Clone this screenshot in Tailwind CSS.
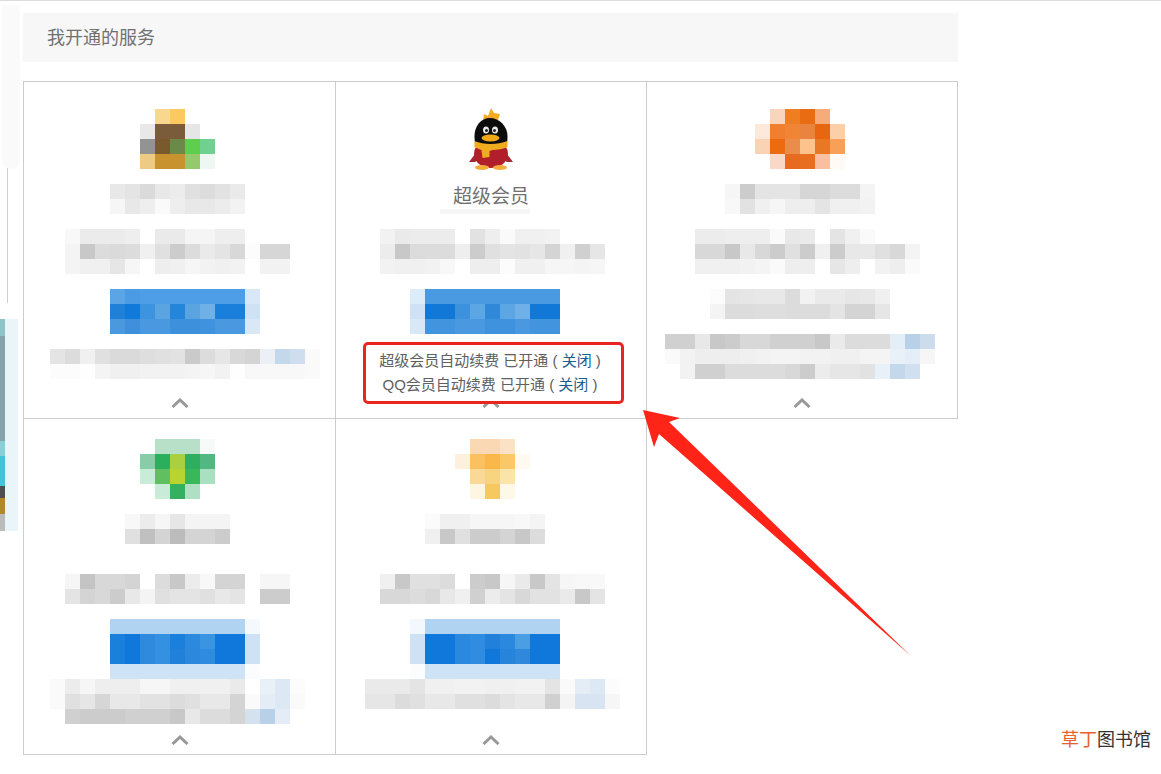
<!DOCTYPE html>
<html lang="zh">
<head>
  <meta charset="utf-8" />
  <title>我开通的服务</title>
  <script src="https://cdn.jsdelivr.net/npm/@tailwindcss/browser@4"></script>
</head>
<body class="bg-white h-[774px] overflow-hidden relative border-t border-[#dcdcdc] [font-family:'Liberation_Sans','Noto_Sans_CJK_SC',sans-serif]">
  <!-- cut-off neighbour on the left edge -->
  <div class="absolute left-[2px] top-[4px] w-[18px] h-[164px] bg-[#fafafa] rounded-b-full"></div>
  <div class="absolute left-[7px] top-[167px] w-px h-[135px] bg-[#cfcfcf]"></div>
  <div class="absolute left-0 top-[318px] w-[18px] h-[212px] bg-[#e9f5f9]">
    <div class="w-[5px] flex flex-col h-full">
      <div class="h-[17px] bg-[#8fc4c8]"></div>
      <div class="h-[105px] bg-[#86a4aa]"></div>
      <div class="h-[15px] bg-[#8ccdd8]"></div>
      <div class="h-[30px] bg-[#43c4d8]"></div>
      <div class="h-[12px] bg-[#4b4f50]"></div>
      <div class="h-[16px] bg-[#b08a2a]"></div>
      <div class="h-[17px] bg-[#bbbbbb]"></div>
    </div>
  </div>

  <div class="relative ml-[23px] w-[935px] pt-[12px]">
    <div class="h-[49px] bg-[#f7f7f7] pl-[24px] pt-[2px] flex items-center text-[18px] text-[#707070]">我开通的服务</div>

    <div class="mt-[19px] grid grid-cols-[313px_311px_311px] grid-rows-[338px_336px]">
      <!-- row 1 -->
      <div class="flex flex-col border-t border-l border-r border-b border-[#cccccc] pt-[27px]">
        <div data-px=". f9d78f fcc95f . .|e8 7a5c3a 7a5c3a e6 .|93 7a5a2c 6b8a4a 5fce4f 6fd08f|eecb85 c8922f c8922f 95c96c eef7f2" class="ml-[116px]"></div>
        <div data-px="e8 e4 da e8 ec e0 dc e2 ea|f6 e8 ee fa ee e8 e8 ec f2" class="ml-[86px] mt-[15px]"></div>
        <div data-px="f8 eb eb eb ee . ea ea f5 f5 ee ee . . .|f4 c8 dc da dc f0 e0 cc dc ea e4 d8 fc d6 d6|f4 f0 f0 e6 f6 . ee f0 f6 f2 f0 f2 . f2 f2" class="ml-[41px] mt-[15px]"></div>
        <div data-px="5ba4e6 4a9be4 4d9ee6 4d9ee6 4d9ee6 4d9ee6 4d9ee6 4d9ee6 4d9ee6 d8e8f8|1f80d8 0f7ad9 3d94de 5aa4e2 2486da 5ba4e2 6fb0e6 1a7fdb 1a7fdb cfe2f5|4a98de 3e90dc 4a98e0 4a98e0 3c90dc 3c90dc 3f92dd 4a98e0 4a98e0 d9e7f6" class="ml-[86px] mt-[15px]"></div>
        <div data-px="e4 dc f0 e0 da da de e0 e2 ca dc e6 d8 d4 eaf0f6 c4d8ec cfdeef fa|fc fc fe f4 f0 f0 f2 f2 f2 f4 f6 f2 fe f8 f8 f8 f8 fa" class="ml-[26px] mt-[15px]"></div>
        <svg class="mt-auto mb-[10px] mx-auto w-[18px] h-[10px]" viewBox="0 0 18 10"><path d="M1.5 9 9 2l7.500 7" fill="none" stroke="#999" stroke-width="3"/></svg>
      </div>

      <div class="flex flex-col border-t border-r border-b border-[#cccccc] pt-[26px]">
        <svg class="ml-[133px] w-[44px] h-[62px]" viewBox="0 0 44 62">
          <path d="M14 13 15 6l4 2 3-8 3 5 6 1-2 6-5 4-9 0z" fill="#f2ab22"/>
          <path d="M9 42 0 54l6 0 7-5zM35 42l9 12-6 0-7-5z" fill="#a32a32"/>
          <ellipse cx="22" cy="46" rx="17" ry="14" fill="#b01f2a"/>
          <ellipse cx="13" cy="59.500" rx="7" ry="2.500" fill="#f4ad3a"/>
          <ellipse cx="31" cy="59.500" rx="7" ry="2.500" fill="#f4ad3a"/>
          <path d="M21 10C12 10 5.500 18 5.500 28c0 5 .5 7 1.500 9h30c1-2 1.500-4 1.500-9C38.500 18 30 10 21 10z" fill="#0c0c0c"/>
          <path d="M5.500 33c9 4 23 4 33 0v6c-4 2-10 3-15 3l-3 1v6l-7 1-1-8c-3-1-5-2-7-3z" fill="#eeac1e"/>
          <ellipse cx="17" cy="22" rx="3" ry="3.500" fill="#e8e8e8"/>
          <ellipse cx="26" cy="22" rx="3" ry="3.500" fill="#e8e8e8"/>
          <circle cx="17.500" cy="22.500" r="1.500" fill="#222"/>
          <circle cx="25.500" cy="22.500" r="1.500" fill="#222"/>
          <ellipse cx="21.500" cy="30" rx="9" ry="3.500" fill="#f0a818"/>
        </svg>
        <div class="h-[30px] mt-[14px] pt-[1px]">
          <div class="text-center text-[19px] leading-[24px] text-[#707070]">超级会员</div>
          <div class="ml-[104px] w-[90px] h-[5px] bg-[#f6f6f6]"></div>
        </div>
        <div data-px="f2 ea ec ec ec . e2 ee fa f0 f0 f2 . . .|ec c8 dc dc dc ee cc e0 e4 e2 e6 d4 f0 d0 e6|f2 f0 f0 f2 f8 . ee ee fc f0 f0 f6 f6 f4 f6" class="ml-[44px] mt-[15px]"></div>
        <div data-px="dcecf9 4a9ae2 4a9ae2 4a9ae2 4a9ae2 4a9ae2 4a9ae2 4a9ae2 4a9ae2 4a9ae2|cfe2f5 1278d8 1278d8 3c92dc 5ca6e4 3088d8 5ca6e4 70b0e8 1278d8 1278d8|d8e8f6 4394de 4394de 4a98e0 4a98e0 3f92dd 3f92dd 4a98e0 4394de 4394de" class="ml-[74px] mt-[15px]"></div>
        <div class="relative z-10 ml-[27px] mt-[8px] mb-[-6px] w-[261px] h-[62px] border-[3px] border-[#e8261f] rounded-[5px] bg-white pr-[7px] flex flex-col justify-center text-center text-[15px] leading-[24px] text-[#606060]">
          <p>超级会员自动续费 已开通 ( <span class="text-[#1c5c8c]">关闭</span> )</p>
          <p>QQ会员自动续费 已开通 ( <span class="text-[#1c5c8c]">关闭</span> )</p>
        </div>
        <svg class="mt-auto mb-[10px] mx-auto w-[18px] h-[10px]" viewBox="0 0 18 10"><path d="M1.5 9 9 2l7.500 7" fill="none" stroke="#999" stroke-width="3"/></svg>
      </div>

      <div class="flex flex-col border-t border-r border-b border-[#cccccc] pt-[27px]">
        <div data-px=". f9d5bd ef7d22 ea6c12 f6ab78 .|fde9dc f08030 ef8535 e9843f e8660f fbd0a8|fbd3b4 ec6a10 ea8c4a fcc48c e87826 f8a058|. fad8c8 e66a20 e96f20 f8c0a0 fffaf6" class="ml-[108px]"></div>
        <div data-px="f6 cc e4 e4 e4 d6 d6 dc dc f4|f8 e2 f0 f6 ee ee e4 f0 f0 f2" class="ml-[78px] mt-[15px]"></div>
        <div data-px="ec ec ee ee ee fa e8 ea . e4 f0 fa . . .|d8 d8 c8 e8 d8 cc e0 cc f0 cc e8 e8 e0 d8 f4|f0 f0 f0 f2 f4 fa ee ee . e6 ee . f2 ee fa" class="ml-[48px] mt-[15px]"></div>
        <div data-px="fc e4 e6 e8 e8 dc f2 ea ea e6 e8 f0|f4 dc dc de de dc dc dc e4 d4 d4 e6" class="ml-[63px] mt-[15px]"></div>
        <div data-px="d0 d0 e8 c8 cc d8 d8 d0 d0 d0 c8 ea dc dc dc e4eef6 b8d0e8 ccdcec|fa f2 ee ee ee f0 f2 f4 f4 f2 f2 f0 f0 f4 f4 e8f0f8 e4eef8 f6|. f2 d0 d0 dc dc dc dc d8 cc ec e6 e6 e2 e8f0f8 c4d8ec d0e0f0 ." class="ml-[18px] mt-[15px]"></div>
        <svg class="mt-auto mb-[10px] mx-auto w-[18px] h-[10px]" viewBox="0 0 18 10"><path d="M1.5 9 9 2l7.500 7" fill="none" stroke="#999" stroke-width="3"/></svg>
      </div>

      <!-- row 2 -->
      <div class="flex flex-col border-l border-r border-b border-[#cccccc] pt-[20px]">
        <div data-px=". b8e0c8 b8e0c8 b8e0c8 f6faf8|88cca8 2ab05c a8d040 30ae60 50b880|c8ecd8 60c060 b8d430 38b858 a8e0c0|. c8ecd8 34b060 b0e0c4 ." class="ml-[116px]"></div>
        <div data-px="f8 ec f6 e6 f4 f4 f4|e0 c0 d4 bc d4 d4 cc" class="ml-[101px] mt-[15px]"></div>
        <div data-px="f6 c4 d8 d8 d4 . dc c8 ec f8 d4 d4 . f6 f6|e4 d4 d8 cc e8 f4 e0 e4 e4 e0 e8 e4 . cc cc" class="ml-[41px] mt-[30px]"></div>
        <div data-px="b0d3f2 b0d3f2 b0d3f2 b0d3f2 b0d3f2 b0d3f2 b0d3f2 b0d3f2 b0d3f2 f4f9fd|1a80dc 1078da 2f8ade 3490e0 1a80dc 2c8ade 3a94e2 1078da 1078da cfe2f5|1a80dc 1078da 2f8ade 3490e0 2080da 2c88dc 2e8cde 1078da 1078da cfe2f5|cfe3f6 cfe3f6 cfe3f6 cfe3f6 cfe3f6 cfe3f6 cfe3f6 cfe3f6 cfe3f6 fafcfe" class="ml-[86px] mt-[15px]"></div>
        <div data-px="fa ec f6 ee ee ee f6 f6 f0 f0 f0 f0 ea . e8f0f8 dce8f4 fc|fa e0 e6 d6 e8 e8 e2 e2 dc e0 e8 e8 d4 fa e4ecf6 dce8f4 fa|. d0 cc cc cc d0 d0 d0 c8 e8 dc dc d4 d4e2f0 b8d0e8 e4ecf6 ." class="ml-[26px]"></div>
        <svg class="mt-auto mb-[9px] mx-auto w-[18px] h-[10px]" viewBox="0 0 18 10"><path d="M1.5 9 9 2l7.500 7" fill="none" stroke="#999" stroke-width="3"/></svg>
      </div>

      <div class="flex flex-col border-r border-b border-[#cccccc] pt-[20px]">
        <div data-px=". fbd8b4 fbd8b4 fbe2c4 .|fdf0dc fbc060 fab84a fbc868 fffaf0|. f9d898 f8d480 fbe4a8 .|. fef6e0 f6c860 fef8e8 ." class="ml-[119px]"></div>
        <div data-px="fb f0 f0 f6 f6 f6 f8 f4|f0 c8 e0 cc cc d4 c8 dc" class="ml-[89px] mt-[15px]"></div>
        <div data-px="f0 c8 e0 e0 dc . cc c8 f6 ea c8 e4 f6 f8 f8|d8 d8 dc d8 e8 f0 d0 ec e4 d8 e2 e2 ea c8 e4" class="ml-[44px] mt-[30px]"></div>
        <div data-px="f2f8fd b0d3f2 b0d3f2 b0d3f2 b0d3f2 b0d3f2 b0d3f2 b0d3f2 b0d3f2 b0d3f2|cfe2f5 1078da 1078da 2a88de 2f8ce0 2080da 2a88de 4a9ee4 1078da 1078da|cfe2f5 1078da 1078da 2a88de 2f8ce0 1078da 2884da 3088dc 1078da 1078da|fafcfe cfe3f6 cfe3f6 cfe3f6 cfe3f6 cfe3f6 cfe3f6 cfe3f6 cfe3f6 cfe3f6" class="ml-[74px] mt-[15px]"></div>
        <div data-px="ea ea ea e4 f0 f0 f2 f2 f0 f0 f2 f2 e4 fa e4ecf6 dce8f4 fc|e6 e6 dc e0 e8 e8 e0 e0 dc e4 e8 e8 d0 f4 d8e4f2 d8e4f2 f6" class="ml-[29px]"></div>
        <svg class="mt-auto mb-[9px] mx-auto w-[18px] h-[10px]" viewBox="0 0 18 10"><path d="M1.5 9 9 2l7.500 7" fill="none" stroke="#999" stroke-width="3"/></svg>
      </div>
    </div>
  </div>

  <!-- annotation arrow -->
  <svg class="absolute left-0 top-[-1px] w-[1161px] h-[774px] z-20 pointer-events-none" viewBox="0 0 1161 774">
    <path d="M643 410 680 418 669 422 911 656 659 434 654 447z" fill="#ff2318"/>
  </svg>

  <div class="absolute left-[1061px] top-[727px] text-[18px] leading-[24px] text-[#333] whitespace-nowrap"><span class="text-[#e8622c]">草丁</span>图书馆</div>

  <script>
    // blurred blocks: 15px mosaic, "|" splits rows, 2 hex digits = grey, "." = empty
    document.querySelectorAll("[data-px]").forEach((el) => {
      el.dataset.px.split("|").forEach((row) => {
        const line = document.createElement("div");
        line.className = "flex";
        row.trim().split(/\s+/).forEach((c) => {
          const px = document.createElement("div");
          px.className = "w-[15px] h-[15px] shrink-0";
          if (c !== ".") px.style.backgroundColor = c.length === 2 ? `#${c}${c}${c}` : `#${c}`;
          line.appendChild(px);
        });
        el.appendChild(line);
      });
    });
  </script>
</body>
</html>
